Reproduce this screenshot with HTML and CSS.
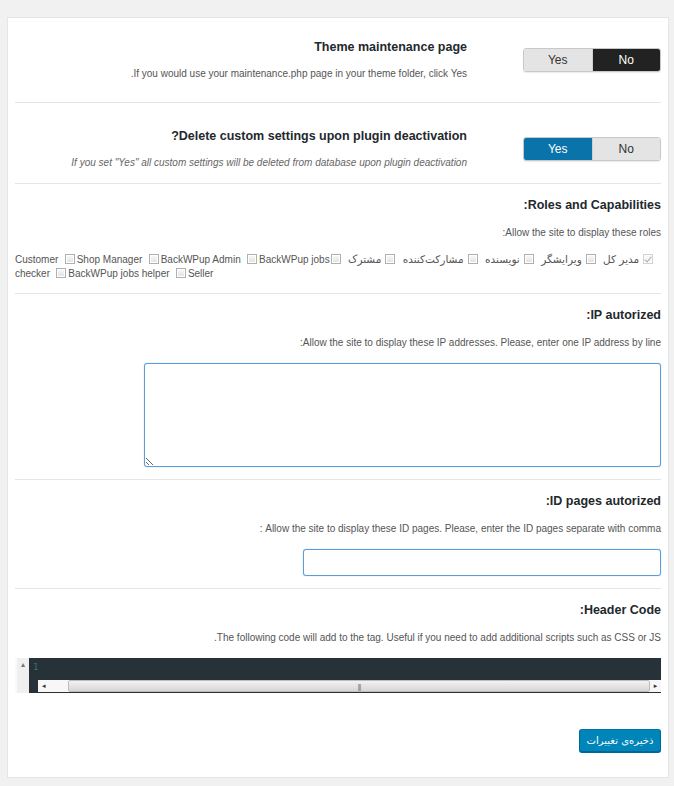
FILE: index.html
```html
<!DOCTYPE html>
<html lang="fa" dir="rtl">
<head>
    <meta charset="UTF-8">
    <meta name="viewport" content="width=device-width, initial-scale=1.0">
    <title>تنظیمات حالت تعمیر</title>
    <link rel="stylesheet" href="styles.css">
</head>
<body>
    <div class="wrap">
        <form class="settings-panel" onsubmit="return false;">

            <div class="setting setting-switch">
                <div class="switch-cell">
                    <div class="switch" dir="ltr">
                        <label class="switch-opt">Yes</label>
                        <label class="switch-opt is-active-dark">No</label>
                    </div>
                </div>
                <div class="setting-text">
                    <h3 class="setting-title">Theme maintenance page</h3>
                    <p class="setting-desc">If you would use your maintenance.php page in your theme folder, click Yes.</p>
                </div>
            </div>

            <div class="setting setting-switch">
                <div class="switch-cell">
                    <div class="switch" dir="ltr">
                        <label class="switch-opt is-active-blue">Yes</label>
                        <label class="switch-opt">No</label>
                    </div>
                </div>
                <div class="setting-text">
                    <h3 class="setting-title">Delete custom settings upon plugin deactivation?</h3>
                    <p class="setting-desc setting-desc-em">If you set "Yes" all custom settings will be deleted from database upon plugin deactivation</p>
                </div>
            </div>

            <div class="setting">
                <h3 class="setting-title">Roles and Capabilities:</h3>
                <p class="setting-desc">Allow the site to display these roles:</p>
                <div class="roles">
                    <input type="checkbox" id="role-administrator" checked disabled><label class="fa" for="role-administrator">مدیر کل</label>&nbsp;&nbsp;
                    <input type="checkbox" id="role-editor"><label class="fa" for="role-editor">ویرایشگر</label>&nbsp;&nbsp;
                    <input type="checkbox" id="role-author"><label class="fa" for="role-author">نویسنده</label>&nbsp;&nbsp;
                    <input type="checkbox" id="role-contributor"><label class="fa" for="role-contributor">مشارکت‌کننده</label>&nbsp;&nbsp;
                    <input type="checkbox" id="role-subscriber"><label class="fa" for="role-subscriber">مشترک</label>&nbsp;&nbsp;
                    <input type="checkbox" id="role-customer"><label for="role-customer">Customer</label>&nbsp;&nbsp;
                    <input type="checkbox" id="role-shop_manager"><label for="role-shop_manager">Shop Manager</label>&nbsp;&nbsp;
                    <input type="checkbox" id="role-backwpup_admin"><label for="role-backwpup_admin">BackWPup Admin</label>&nbsp;&nbsp;
                    <input type="checkbox" id="role-backwpup_check"><label for="role-backwpup_check">BackWPup jobs <span>checker</span></label>&nbsp;&nbsp;
                    <input type="checkbox" id="role-backwpup_helper"><label for="role-backwpup_helper">BackWPup jobs helper</label>&nbsp;&nbsp;
                    <input type="checkbox" id="role-seller"><label for="role-seller">Seller</label>
                </div>
            </div>

            <div class="setting">
                <h3 class="setting-title">IP autorized:</h3>
                <p class="setting-desc">Allow the site to display these IP addresses. Please, enter one IP address by line:</p>
                <textarea class="field field-area" name="ip_list"></textarea>
            </div>

            <div class="setting">
                <h3 class="setting-title">ID pages autorized:</h3>
                <p class="setting-desc">Allow the site to display these ID pages. Please, enter the ID pages separate with comma :</p>
                <input type="text" class="field field-text" name="id_pages">
            </div>

            <div class="setting setting-last">
                <h3 class="setting-title">Header Code:</h3>
                <p class="setting-desc">The following code will add to the tag. Useful if you need to add additional scripts such as CSS or JS.</p>

                <!-- code editor box -->
                <div class="code-editor" dir="ltr">
                    <div class="cm-vscroll"><span class="cm-arrow">&#9652;</span></div>
                    <div class="cm-body">
                        <div class="cm-line"><span class="cm-linenum">1</span></div>
                        <div class="cm-hscroll">
                            <span class="sb-btn sb-left">&#9666;</span>
                            <span class="sb-thumb">|||</span>
                            <span class="sb-btn sb-right">&#9656;</span>
                        </div>
                    </div>
                </div>
            </div>

            <div class="form-actions">
                <button type="submit" class="button-primary">ذخیره‌ی تغییرات</button>
            </div>
        </form>
    </div>
</body>
</html>
```

FILE: styles.css
```css
* {
    box-sizing: border-box;
}

body {
    margin: 0;
    background: #f1f1f1;
    font-family: "Liberation Sans", "DejaVu Sans", sans-serif;
    font-size: 10px;
    color: #555;
}

.wrap {
    padding: 17px 5px 7px 7px;
}

.settings-panel {
    background: #fff;
    border: 1px solid #e5e5e5;
    padding: 0 7px 25px;
}

.setting {
    border-bottom: 1px solid #e5e5e5;
    padding: 11px 0 12px;
}

.setting-last {
    border-bottom: none;
    padding-bottom: 0;
}

.setting-title {
    margin: 0;
    font-size: 12.5px;
    font-weight: 700;
    line-height: 20px;
    color: #23282d;
}

.setting-desc {
    margin: 10px 0 0;
    line-height: 16px;
    color: #555;
}

.setting-desc-em {
    font-style: italic;
    color: #666;
}

/* yes / no rows */
.setting-switch {
    display: flex;
    align-items: center;
    padding: 19px 0 20px;
}

.setting-switch + .setting-switch {
    padding: 23px 0 12px;
}

.setting-switch .setting-desc {
    margin-top: 9px;
}

.switch-cell {
    width: 194px;
    display: flex;
    margin-top: 1px;
}

.setting-text {
    flex: 1;
}

.switch {
    display: flex;
    width: 138px;
    height: 24px;
    border: 1px solid #c8c8c8;
    border-radius: 3px;
    overflow: hidden;
    box-shadow: 0 1px 1px rgba(0, 0, 0, 0.08);
}

.switch-opt {
    flex: 1;
    display: flex;
    align-items: center;
    justify-content: center;
    background: #e4e4e4;
    color: #333;
    font-size: 12px;
    cursor: pointer;
}

.switch-opt + .switch-opt {
    border-left: 1px solid #d0d0d0;
}

.switch-opt.is-active-dark {
    background: #222;
    color: #fff;
}

.switch-opt.is-active-blue {
    background: #0a73aa;
    color: #fff;
}

/* role checkboxes */
.roles {
    margin-top: 11px;
    line-height: 14px;
    text-align: left;
    word-spacing: -1px;
    color: #555;
}

.roles label {
    word-spacing: normal;
}

.roles .fa {
    margin-right: 3px;
    font-family: "DejaVu Sans", sans-serif;
    font-size: 10.5px;
}

.roles input[type="checkbox"] {
    -webkit-appearance: none;
    appearance: none;
    position: relative;
    width: 10px;
    height: 10px;
    margin: 0 2px 0 1px;
    vertical-align: -1px;
    border: 1px solid #b0b0b0;
    background: linear-gradient(#fafafa, #e0e0e0);
    box-shadow: inset 0 0 0 1px #fff;
}

.roles input[type="checkbox"]:checked::after {
    content: "";
    position: absolute;
    left: 2px;
    top: 0;
    width: 3px;
    height: 6px;
    border: solid #a9a9a9;
    border-width: 0 1px 1px 0;
    transform: rotate(40deg);
}

.roles input[type="checkbox"]:disabled {
    border-color: #d2d2d2;
    background: #f6f6f6;
}

/* text fields */
.field {
    display: block;
    border: 1px solid #5b9dd9;
    border-radius: 3px;
    background: #fff;
    box-shadow: 0 0 1px rgba(30, 140, 190, 0.6);
    font: inherit;
    outline: none;
}

.field-area {
    width: 517px;
    height: 104px;
    margin-top: 12px;
}

.field-text {
    width: 358px;
    height: 27px;
    margin-top: 12px;
}

/* code editor */
.code-editor {
    display: flex;
    height: 35px;
    margin-top: 12px;
}

.cm-vscroll {
    width: 14px;
    background: #f0f0f0;
    border-left: 2px solid #fafafa;
    text-align: center;
    color: #777;
    font-size: 8px;
    line-height: 14px;
}

.cm-body {
    flex: 1;
    display: flex;
    flex-direction: column;
    background: #263238;
    padding-bottom: 1px;
}

.cm-line {
    flex: 1;
    padding: 3px 0 0 4px;
}

.cm-linenum {
    color: #3e6f70;
    font-family: "DejaVu Sans Mono", monospace;
    font-size: 9px;
}

.cm-hscroll {
    display: flex;
    height: 12px;
    margin-left: 9px;
    background: #fff;
    font-size: 7px;
    color: #333;
}

.sb-btn {
    display: flex;
    align-items: center;
    justify-content: center;
    background: #f7f7f7;
}

.sb-left {
    width: 30px;
    justify-content: flex-start;
    padding-left: 4px;
}

.sb-right {
    width: 11px;
}

.sb-thumb {
    flex: 1;
    display: flex;
    align-items: center;
    justify-content: center;
    border: 1px solid #bdbdbd;
    border-radius: 2px;
    background: linear-gradient(#f2f2f2, #d6d6d6);
    color: #777;
    letter-spacing: -1px;
}

/* save */
.form-actions {
    margin-top: 36px;
}

.button-primary {
    display: block;
    width: 82px;
    height: 23px;
    padding: 0;
    background: #0085ba;
    border: 1px solid #0073aa;
    border-color: #0073aa #006799 #006799;
    border-radius: 3px;
    box-shadow: 0 1px 0 #006799;
    color: #fff;
    font-family: "DejaVu Sans", sans-serif;
    font-size: 10px;
    cursor: pointer;
}
```
